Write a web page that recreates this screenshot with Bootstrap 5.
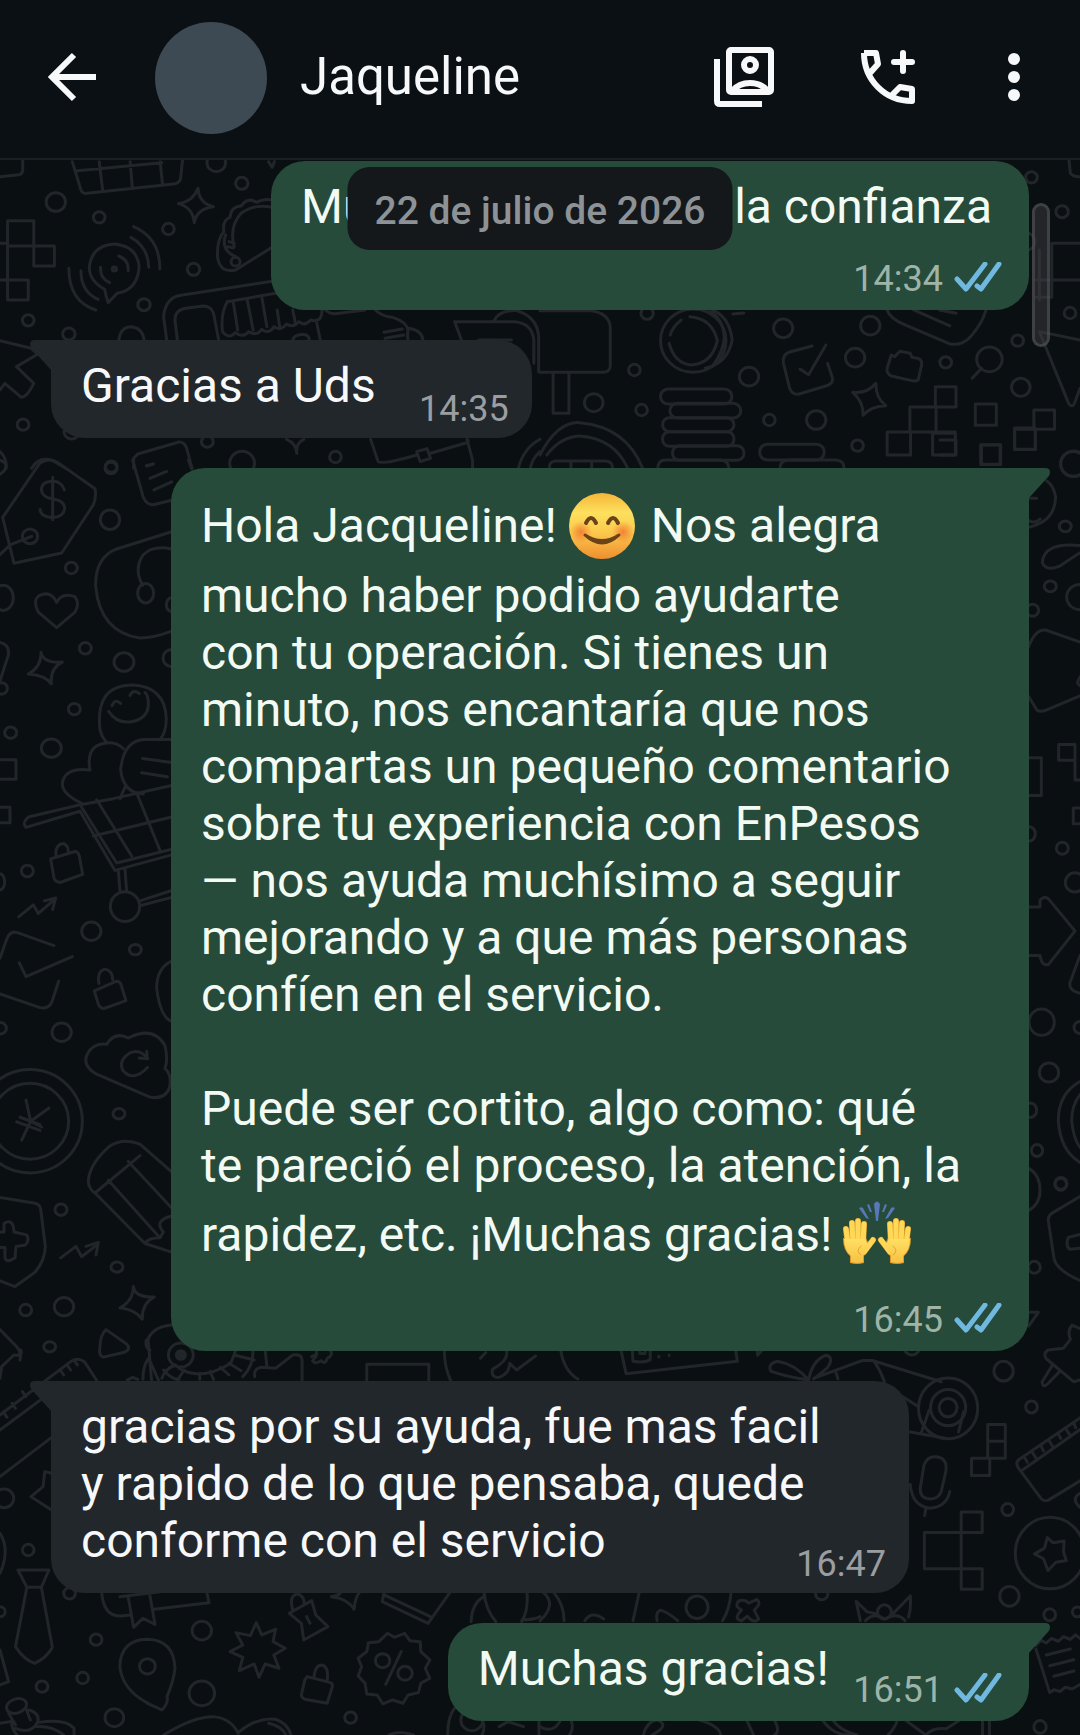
<!DOCTYPE html>
<html lang="es">
<head>
<meta charset="utf-8">
<meta name="viewport" content="width=device-width, initial-scale=1">
<title>Jaqueline</title>
<link href="https://cdn.jsdelivr.net/npm/bootstrap@5.3.0/dist/css/bootstrap.min.css" rel="stylesheet">
<style>
:root{--ground:#0a0f12;--sent:#264b3a;--got:#22272b}
body{background:var(--ground);font-family:Roboto,"Noto Sans",sans-serif;color:#f7f8fa}
.chat-head{height:160px;padding:0 60px 4px 48px;background:#0b1014;border-bottom:2px solid #1b1f22}
.icon-btn{padding:0;border:0;background:none;color:#f7f8fa;line-height:0}
.avatar{width:112px;height:112px;background:#3d4953;margin:2px 0 0 59px}
.contact{font-size:51px;line-height:60px;font-weight:400;margin-left:33px}
.head-tools{gap:87px}
.doodle{top:0;left:0;width:1080px;height:1575px;fill:none;stroke:#22262a;stroke-width:3;stroke-linecap:round;stroke-linejoin:round}
.doodle *{vector-effect:non-scaling-stroke}
.thread{gap:30px;padding:1px 51px 15px}
.bubble{max-width:calc(100% - 120px);border-radius:34px;display:grid}
.bubble-text{font-size:48px;line-height:57px;padding:17px 37px 23px 30px}
.sent{background:var(--sent);color:#f3faf3}
.got{background:var(--got)}
.sent.tailed{border-top-right-radius:0}
.got.tailed{border-top-left-radius:0}
.stamp{font-size:36px;line-height:42px;gap:11px;justify-self:end}
.sent .stamp{color:#9fb4a8;padding:0 27px 10px 0}
.got .stamp{color:#9b9ea1;padding:0 23px 8px 0}
.overlap>.bubble-text,.overlap>.stamp{grid-area:1/1}
.overlap>.bubble-text{padding-bottom:24px}
.overlap>.stamp{align-self:end}
.got.overlap .room{padding-right:156px}
.sent.overlap .room{padding-right:200px}
.wide{width:100%}
.tail{width:22px;height:32px;top:0}
.sent .tail{left:100%;margin-left:-1px;fill:var(--sent)}
.got .tail{right:100%;margin-right:-1px;fill:var(--got)}
.emo{width:70px;height:82px;vertical-align:-25px;margin:0 2px 0 -2px}
.day{top:7px;left:50%;transform:translateX(-50%);background:#14181b;color:#8d9296;border-radius:22px;font-size:39px;line-height:47px;font-weight:500;padding:21px 27px 15px;white-space:nowrap}
.scroll-thumb{top:43px;right:30px;width:18px;height:144px;border-radius:9px;background:rgba(60,60,64,.5);border:3px solid rgba(90,92,95,.5)}
</style>
<script src="https://cdn.jsdelivr.net/npm/bootstrap@5.3.0/dist/js/bootstrap.bundle.min.js"></script>
</head>
<body>
<header class="chat-head d-flex align-items-center">
  <button class="icon-btn" type="button" aria-label="Volver"><svg width="48" height="50" viewBox="0 0 48 50" fill="none" stroke="currentColor" stroke-width="6"><path d="M48 25H5M26 3L4 25L26 47"/></svg></button>
  <div class="avatar rounded-circle"></div>
  <h1 class="contact mb-0">Jaqueline</h1>
  <div class="head-tools d-flex align-items-center ms-auto">
    <button class="icon-btn" type="button" aria-label="Contacto"><svg width="60" height="60" viewBox="0 0 60 60" fill="none" stroke="currentColor" stroke-width="6"><path d="M3 12V54Q3 57 6 57H48"/><rect x="15" y="3" width="42" height="42" rx="2"/><circle cx="36" cy="18" r="6"/><path d="M18 44Q25 36 36 36T54 44"/></svg></button>
    <button class="icon-btn" type="button" aria-label="Llamar"><svg width="54" height="54" viewBox="0 0 54 54" fill="none" stroke="currentColor" stroke-width="6" stroke-linejoin="round"><path d="M3 3C3 30 24 51 51 51V39L39 37L31 45M9 23L17 14L15 3H3"/><path stroke-linecap="round" d="M33 12H51M42 3V21"/></svg></button>
    <button class="icon-btn" type="button" aria-label="Más opciones"><svg class="d-block" width="18" height="50" viewBox="0 0 18 50" fill="currentColor"><circle cx="12" cy="7" r="6"/><circle cx="12" cy="25" r="6"/><circle cx="12" cy="43" r="6"/></svg></button>
  </div>
</header>

<main class="position-relative overflow-hidden">
  <svg class="doodle position-absolute" viewBox="0 160 1080 1575" aria-hidden="true">
    <g transform="translate(0 150) scale(.3444 .3333)">
      <path d="M0 80L55 74Q66 72 66 60V30M210 35L235 120Q240 132 252 130L505 102Q520 100 524 88L530 30M225 62L470 38M288 35L298 120M378 35L384 112M465 35L472 104M780 35L790 52L797 35"/>
      <path d="M575 115Q578 160 620 170Q572 175 564 218Q560 172 518 161Q560 155 575 115Z"/>
      <circle cx="162" cy="156" r="28"/><circle cx="628" cy="38" r="27"/><circle cx="288" cy="202" r="17"/><circle cx="702" cy="100" r="18"/><circle cx="489" cy="237" r="17"/><circle cx="562" cy="358" r="18"/><circle cx="418" cy="464" r="18"/><circle cx="82" cy="511" r="17"/><circle cx="200" cy="552" r="18"/><circle cx="67" cy="824" r="17"/><circle cx="602" cy="875" r="17"/><circle cx="703" cy="940" r="36"/><circle cx="974" cy="921" r="17"/><circle cx="323" cy="950" r="17"/><circle cx="208" cy="845" r="22"/>
      <path d="M22 212H98V288H22ZM98 288H158V348H98ZM22 290V450H82V390H0M0 280H22"/>
      <path d="M304 418Q255 390 260 345Q270 285 332 282Q398 288 404 350Q400 420 340 430L314 458Q308 440 304 418ZM292 352Q290 385 318 398M345 318Q375 330 372 362M380 262Q430 290 432 352M388 230Q465 265 464 357M235 362Q235 425 285 448M200 355Q200 455 278 480"/><circle cx="332" cy="357" r="6"/>
      <path d="M684 360Q640 370 632 325Q628 270 650 245Q645 210 668 202Q670 170 700 168Q720 140 745 157Q765 145 790 150M684 360L790 292M680 290Q665 230 700 190Q740 160 790 172M655 255Q640 300 684 320M665 275L680 280M662 290L678 294"/><circle cx="684" cy="335" r="13"/>
      <path d="M484 570L475 500Q480 440 530 435L800 392M515 570L508 510Q508 480 540 475L590 468Q612 468 620 490L635 570M660 455L800 430M660 455Q640 490 646 545Q665 570 683 548Q705 565 722 545Q745 560 760 538Q780 555 796 530Q815 545 832 522Q850 535 868 515Q885 530 902 510Q935 520 935 480M678 460L690 540M718 450L735 540M760 440L775 530M805 480L812 530M850 480L858 520M920 520L930 570M850 570Q852 555 880 553Q898 555 898 570M345 570Q350 530 382 530Q415 535 418 570"/>
      <path d="M945 480Q960 495 985 490L1060 480M1090 480Q1110 500 1140 502Q1180 515 1185 540Q1180 570 1190 580M1185 535Q1225 540 1228 570M1115 547L1168 537M1118 565L1172 555M1320 515H1495Q1545 520 1550 570V640M1320 515L1340 570M1435 512Q1450 480 1500 482Q1560 500 1564 560V665M1390 570H1485"/>
      <path d="M0 572L90 595L110 612L48 650L98 700Q80 740 62 742L14 700L0 720M832 868Q860 880 862 910Q858 880 882 868M388 955L388 925L400 912L520 876Q535 875 542 895L558 955M425 948L445 942M92 955Q110 920 150 930L190 955M0 905Q20 925 18 955M1076 868L1098 935Q1110 945 1210 915M1250 910L1350 880Q1365 875 1356 868L1372 930V955M1210 905L1240 896L1250 925L1220 935ZM1505 955Q1520 895 1568 868M1540 955Q1545 925 1568 905"/>
    </g>
    <g transform="translate(540 150) scale(.3444 .3333)">
      <path d="M1536 30L1540 70Q1550 82 1568 80M0 482H150Q200 490 204 530V650Q202 665 185 667H0M38 670V790H84V670M0 915Q50 815 115 818Q250 830 298 955M20 915Q60 860 115 858Q215 865 255 955M28 955Q25 935 45 933H190Q212 935 210 955M90 935V955M150 935V955"/>
      <circle cx="445" cy="572" r="95"/><path d="M375 580Q390 640 440 645Q500 640 515 572Q500 505 435 500M378 555Q385 530 410 510M480 655Q545 640 558 570Q550 500 500 480M500 650Q535 600 535 560Q530 500 490 485M560 492L592 489"/>
      <rect x="350" y="717" width="207" height="45" rx="22"/><rect x="377" y="760" width="206" height="44" rx="22"/><rect x="356" y="803" width="207" height="42" rx="20"/><rect x="356" y="845" width="207" height="44" rx="20"/><rect x="385" y="887" width="207" height="44" rx="20"/><path d="M342 955Q342 930 365 930H525Q548 932 548 955M697 955Q697 932 720 930H860Q884 932 882 955"/><rect x="638" y="883" width="187" height="47" rx="22"/>
      <path d="M790 588L725 606Q702 615 707 640L725 715Q732 735 750 733L830 708Q855 700 848 680L835 640M755 657L780 674L830 585M1020 615L1030 620L1045 604L1075 610L1080 622L1100 626Q1110 632 1108 645L1098 690Q1090 695 1080 692L1020 678Q1005 670 1008 655ZM1255 685L1282 655M975 700Q975 745 1004 767Q960 768 938 796Q940 755 908 727Q950 732 975 700Z"/>
      <circle cx="1305" cy="628" r="37"/><circle cx="311" cy="490" r="18"/><circle cx="274" cy="660" r="17"/><circle cx="295" cy="780" r="17"/><circle cx="156" cy="758" r="27"/><circle cx="607" cy="680" r="28"/><circle cx="706" cy="535" r="28"/><circle cx="959" cy="527" r="28"/><circle cx="915" cy="623" r="28"/><circle cx="802" cy="810" r="28"/><circle cx="666" cy="810" r="17"/><circle cx="922" cy="887" r="17"/><circle cx="1178" cy="637" r="17"/><circle cx="1387" cy="572" r="17"/><circle cx="1396" cy="712" r="27"/><circle cx="1427" cy="82" r="17"/><circle cx="1516" cy="185" r="18"/><circle cx="1539" cy="489" r="17"/><circle cx="1410" cy="275" r="27"/><circle cx="1550" cy="941" r="38"/>
      <path d="M1008 480Q1015 505 1060 525L1190 582Q1225 588 1250 560Q1285 520 1295 480M1085 480L1190 528M1160 480L1208 490M1148 710H1208V771H1148ZM1074 771H1150V846H1074ZM1008 846H1076V915H1008ZM1140 850H1206V915H1140ZM1150 771V846H1206M1264 762H1325V826H1264ZM1434 780H1494V838H1434ZM1378 838H1438V898H1378ZM1282 885H1336V943H1282ZM1568 280H1486V390H1568M1440 390H1486M1440 442H1486V390M1568 570L1450 545L1535 760Q1545 775 1552 760L1568 715M1450 300V450"/>
    </g>
    <g transform="translate(0 460) scale(.3333 .574)">
      <path d="M8 100L120 5Q150-5 175 5L285 50Q290 65 280 78L185 162L42 180ZM0 165L30 148L95 133M193 52Q185 37 158 37Q125 37 124 52Q127 65 158 68Q193 70 194 85Q190 100 158 100Q123 100 120 86M158 30V104M398 0L430 65Q440 78 460 78L515 70M440 10L460 7M450 32L500 20M462 52L515 38M565 0L575 15M0 0L15 5Q25 15 0 25"/>
      <ellipse cx="90" cy="133" rx="23" ry="13"/><ellipse cx="333" cy="14" rx="18" ry="10"/><ellipse cx="330" cy="104" rx="29" ry="17"/><ellipse cx="214" cy="188" rx="18" ry="10"/><ellipse cx="10" cy="240" rx="30" ry="22"/><ellipse cx="256" cy="328" rx="18" ry="10"/><ellipse cx="372" cy="352" rx="30" ry="16"/><ellipse cx="223" cy="434" rx="18" ry="10"/><ellipse cx="32" cy="475" rx="18" ry="10"/><ellipse cx="154" cy="502" rx="30" ry="16"/><ellipse cx="82" cy="716" rx="18" ry="10"/><ellipse cx="274" cy="821" rx="29" ry="16"/><ellipse cx="406" cy="853" rx="18" ry="9"/><ellipse cx="185" cy="997" rx="29" ry="16"/><ellipse cx="357" cy="1139" rx="18" ry="9"/><ellipse cx="183" cy="1306" rx="18" ry="10"/><ellipse cx="351" cy="1406" rx="18" ry="9"/><ellipse cx="192" cy="1475" rx="29" ry="16"/><ellipse cx="77" cy="1481" rx="18" ry="10"/><ellipse cx="149" cy="1545" rx="18" ry="9"/><ellipse cx="0" cy="735" rx="14" ry="14"/><ellipse cx="2" cy="990" rx="17" ry="10"/><ellipse cx="5" cy="398" rx="17" ry="10"/><ellipse cx="515" cy="252" rx="16" ry="12"/><ellipse cx="515" cy="345" rx="26" ry="15"/>
      <path d="M515 125L350 155Q285 170 287 220Q300 300 420 310Q460 310 515 298M428 218Q400 190 430 165Q460 148 515 155M170 292L115 265Q90 235 140 233Q160 235 170 248Q185 230 225 238Q240 250 225 265ZM123 335Q130 355 187 352Q150 362 154 390Q135 375 85 373Q125 360 123 335ZM0 318Q30 322 25 340L0 385"/><ellipse cx="437" cy="232" rx="24" ry="17"/>
      <path d="M300 470Q285 392 398 392Q495 395 499 450Q499 475 480 487M326 438Q350 460 395 456Q445 450 445 425Q445 410 435 405M336 428Q345 415 362 424M390 410Q400 398 418 407M245 598Q180 580 188 560Q200 535 270 540Q260 510 290 498Q340 485 370 503M300 470Q305 482 318 491M515 487H430Q370 490 362 540Q370 580 430 582M428 520L515 527M425 545L502 552M375 570L360 590"/>
      <path d="M0 522H48V556H0M0 605H30V632H0M515 567L340 590L245 600L85 622Q65 632 78 640L240 612L345 715L515 688M245 605L350 702L515 678M290 592L395 690M410 580L480 680M280 655L515 622M355 715L360 752M375 712L380 752"/><ellipse cx="375" cy="778" rx="44" ry="26"/><path d="M420 768L515 750M422 776L515 762M152 695L225 682Q235 682 238 690L248 722L180 736Q165 735 162 728ZM168 688Q165 670 190 668Q205 672 205 682M56 796L100 775L115 790L165 765M133 768L167 763L158 783M162 846L50 823Q30 820 20 835L0 868M0 930L120 954Q145 957 155 945L176 908M58 876L78 900L217 865M283 925L350 908Q360 908 363 914L378 942L310 956Q298 953 295 948ZM297 912Q290 890 315 887Q338 890 338 905M515 873Q470 885 470 920Q480 970 515 978"/>
      <path d="M290 1070Q245 1055 262 1035Q280 1015 320 1018Q345 995 385 1007Q460 985 495 1020Q505 1045 495 1060Q515 1070 510 1090Q500 1115 450 1110ZM443 1043Q420 1025 390 1033Q355 1045 368 1063Q400 1085 443 1058M418 1042L442 1043L440 1030"/>
      <ellipse cx="90" cy="1152" rx="157" ry="90"/><ellipse cx="90" cy="1152" rx="116" ry="66"/><path d="M78 1115L92 1152L147 1129M92 1152L65 1185M92 1152L125 1162M50 1153L120 1168M60 1145L120 1158"/>
      <path d="M515 1240L420 1192Q370 1180 330 1195Q270 1225 265 1255Q265 1270 285 1277L435 1365L515 1380M285 1277L420 1212M325 1255L475 1352M385 1222L515 1303M435 1365Q445 1355 480 1355L490 1345Q460 1325 515 1317M0 1285L105 1295Q120 1297 122 1305L136 1370Q135 1395 105 1415L45 1440L0 1430M0 1345L12 1345L12 1330Q40 1320 42 1345L80 1350Q90 1360 75 1368L48 1370L45 1390Q20 1400 15 1390V1372L0 1372M182 1390L228 1370L245 1388L292 1367M258 1370L295 1363L288 1385M400 1440Q405 1460 463 1458Q425 1470 427 1497Q405 1480 360 1477Q400 1465 400 1440ZM318 1515L380 1540Q395 1550 370 1555L310 1563Q295 1560 300 1545Q300 1525 318 1515ZM0 1515L50 1545Q65 1555 60 1568M515 1507Q450 1510 440 1540"/>
    </g>
    <g transform="translate(940 440) scale(.3333 .5995)">
      <path d="M0 0H48V25H0M122 8H182V41H122ZM224-20H286V16H224ZM270 145Q345 135 347 95Q340 75 320 68M268 97L290 97M268 135Q285 140 300 132M420 176Q310 170 307 205Q320 220 360 210Q400 195 420 188M266 345Q285 315 318 317L420 337M266 428L290 450Q300 455 320 450L420 427M420 395L412 405L420 410M266 530H304V593H266M356 508H405V534H356ZM405 534V567H420M420 614H400V640H420M266 779H300V768Q310 760 325 765L405 819L325 875Q305 878 300 860H266M420 860L390 905Q385 918 420 923M420 1070Q355 1090 355 1135Q360 1185 420 1205M420 1092Q395 1110 395 1135Q400 1165 420 1180M266 1215Q300 1225 300 1252Q300 1275 266 1285M420 1262L335 1290Q323 1295 325 1303L342 1365Q350 1385 420 1402M420 1325L385 1330Q375 1345 390 1350L420 1348M270 1455L295 1455L266 1478"/>
      <ellipse cx="400" cy="40" rx="38" ry="21"/><ellipse cx="376" cy="144" rx="18" ry="9"/><ellipse cx="331" cy="244" rx="18" ry="9"/><ellipse cx="420" cy="262" rx="40" ry="21"/><ellipse cx="278" cy="284" rx="18" ry="10"/><ellipse cx="268" cy="657" rx="18" ry="12"/><ellipse cx="367" cy="681" rx="18" ry="10"/><ellipse cx="405" cy="738" rx="29" ry="16"/><ellipse cx="305" cy="971" rx="38" ry="22"/><ellipse cx="420" cy="980" rx="18" ry="10"/><ellipse cx="327" cy="1055" rx="29" ry="16"/><ellipse cx="272" cy="1118" rx="18" ry="12"/><ellipse cx="291" cy="1185" rx="17" ry="10"/><ellipse cx="363" cy="1240" rx="18" ry="10"/><ellipse cx="283" cy="1380" rx="18" ry="10"/>
    </g>
    <g transform="translate(540 1180) scale(.3444 .354)">
      <path d="M60 480Q70 540 110 562M235 480L250 547L573 512L568 480M268 480L270 512Q300 518 320 508V480M290 480V490L305 490V480M345 498V500M375 494V496M630 480L632 495L645 480M780 565Q740 520 690 512Q660 518 670 540Q710 555 780 565Q790 510 830 495Q855 500 835 530L795 562M795 560L935 510H965L1165 570M860 545L865 562M970 512Q990 540 1000 570M1050 610L1098 640M1075 712L1180 730M1130 650L1108 712M1230 655L1215 712"/>
      <circle cx="1185" cy="645" r="86"/><circle cx="1185" cy="643" r="51"/><circle cx="1185" cy="643" r="26"/><circle cx="1346" cy="540" r="28"/><circle cx="1427" cy="641" r="17"/><circle cx="1358" cy="931" r="17"/><circle cx="1481" cy="1054" r="101"/><circle cx="1363" cy="1176" r="28"/><circle cx="1480" cy="1228" r="17"/><circle cx="1560" cy="1220" r="14"/><circle cx="456" cy="1207" r="32"/><circle cx="818" cy="1168" r="18"/><circle cx="1452" cy="1545" r="18"/><circle cx="1000" cy="1220" r="20"/><circle cx="1080" cy="470" r="24"/><circle cx="1512" cy="12" r="17"/>
      <path d="M1300 691H1351V786H1300ZM1300 738H1351M1253 786H1306V835H1253ZM1223 938H1284V996H1223ZM1116 996H1223V1098H1116ZM1223 1098H1284V1156H1223ZM1150 782Q1185 785 1178 825L1165 880Q1155 905 1125 900Q1100 895 1105 865L1115 805Q1125 780 1150 782ZM1075 860Q1080 920 1130 927Q1180 925 1190 880M1120 930L1117 948M1568 672L1390 790Q1380 800 1388 812L1455 900Q1462 908 1475 905L1568 850M1400 820L1568 705M1408 785L1415 797M1430 770L1440 785M1455 752L1462 765M1478 735L1488 752M1505 718L1512 730M1525 700L1537 718M1550 685L1555 700M1568 885Q1540 900 1568 925M1473 1010L1490 1025L1522 1020L1520 1050L1528 1075L1498 1080L1475 1103L1462 1070L1436 1056L1465 1040ZM1568 420L1545 410Q1530 425 1540 450L1520 475L1475 480Q1460 490 1470 505L1550 570L1568 565M1490 520L1458 570Q1460 590 1475 575L1510 540M1440 1315L1455 1300L1470 1308L1485 1295L1505 1303L1520 1290L1540 1298L1555 1285L1568 1295M1440 1325L1480 1448L1492 1440L1510 1445L1525 1433L1545 1438L1568 1425M1470 1342L1540 1325M1480 1372L1550 1355M1492 1402L1550 1387"/>
      <path d="M10 1165Q50 1200 0 1245M40 1165Q70 1200 70 1245M288 1165L270 1245M340 1245Q335 1220 350 1215Q370 1220 400 1245M555 1165Q550 1215 530 1245M130 1245Q150 1215 185 1240M600 1190Q570 1180 572 1205L585 1215Q560 1240 585 1245L602 1232Q620 1255 635 1240L622 1215Q645 1195 630 1185L605 1195ZM930 1245L918 1190L950 1220L975 1225M1025 1225L1075 1175Q1078 1210 1070 1235M945 1245Q970 1220 1000 1240Q1040 1220 1060 1245M820 1525Q850 1568 900 1568M1038 1525Q1030 1550 1010 1568M300 1568Q310 1530 340 1525Q380 1540 325 1568M460 1525Q520 1540 525 1568M600 1525L620 1568M680 1525Q700 1560 680 1568M850 1525Q870 1555 920 1568M1060 1525L1120 1568Q1140 1545 1180 1550L1220 1525M1285 1525V1568M1305 1525V1568M90 1525Q100 1550 85 1568M0 1545Q40 1565 60 1525"/>
    </g>
    <g transform="translate(0 1340) scale(.3444 .3333)">
      <path d="M430 0L440 120M425 0Q420 20 435 30M415 118Q415 75 432 55L460 120M470 115Q480 85 510 75M520 85Q585 125 670 70L685 30M475 90Q500 120 520 118M535 90L515 120M580 100V118M610 95L620 118M640 82L665 105M665 70L700 92M680 45L738 60M735 30Q735 80 705 110M770 30L775 80M740 110Q735 85 760 82L800 85L850 45Q875 40 877 60V120M370 120L385 112L400 118M905 50L920 42L918 30M958 30Q970 45 950 55Q945 75 932 62Q915 75 908 62L918 48M1065 120V73H1245V120M1290 30Q1290 80 1308 120M1395 55L1410 38M1470 30Q1480 60 1430 88Q1425 115 1450 112Q1480 100 1480 70L1500 90L1555 48"/>
      <circle cx="525" cy="45" r="36"/><circle cx="525" cy="45" r="13" fill="#22262a"/><circle cx="12" cy="475" r="28"/><circle cx="82" cy="630" r="17"/><circle cx="202" cy="760" r="17"/><circle cx="0" cy="815" r="15"/><circle cx="279" cy="899" r="17"/><circle cx="240" cy="1014" r="17"/><circle cx="122" cy="1040" r="17"/><circle cx="586" cy="872" r="28"/><circle cx="586" cy="1060" r="37"/><circle cx="332" cy="1133" r="27"/><circle cx="1018" cy="1133" r="17"/><circle cx="428" cy="979" r="23"/><circle cx="1111" cy="962" r="21"/><circle cx="1176" cy="1000" r="21"/><circle cx="1370" cy="1140" r="32"/>
      <path d="M60 30Q68 50 40 45L5 80L0 115M0 225L205 65Q225 50 245 65L280 120M0 270L150 155M0 410L150 292M75 170L65 155M105 155L95 140M45 205L35 190M20 232L10 215M185 105L175 90M205 90L195 75M225 75L218 65M150 400L130 395L125 440L90 470L150 510M0 580Q30 630 0 700M52 690H142L120 742H78ZM78 742L45 920Q70 960 100 970Q135 955 152 922L120 742M0 930L25 1025L0 1035M295 755Q300 830 350 828L380 825M448 808L607 788L600 755M348 770L465 755M372 770L388 862L415 835L450 853L435 765M428 1090L470 1110Q490 1090 485 1070Q505 1020 508 985Q505 900 428 898Q350 900 348 980Q355 1050 430 1090"/>
      <path d="M744 848L760 885L800 868L793 905L828 925L795 945L810 985L770 972L752 1012L738 972L695 992L705 952L668 935L705 915L685 878L727 887ZM850 810Q838 765 865 762Q885 770 883 795M840 820L905 782L917 825L952 860L882 900L875 850ZM890 830L900 850M962 770Q985 768 990 755M962 770Q1010 775 1028 808Q1030 775 1045 755M1115 758L1110 785L1243 850L1308 755M1115 765L1250 830M892 1010L960 1028Q967 1032 965 1040L950 1090L885 1078Q872 1070 876 1060L885 1020ZM912 1010Q915 975 935 975Q955 980 950 1020M1165 935L1120 1033M1125 880L1145 892L1175 880L1190 902L1220 905L1222 935L1248 960L1235 985L1248 1015L1222 1030L1215 1058L1185 1065L1170 1090L1140 1080L1112 1092L1095 1065L1065 1062L1060 1030L1040 1008L1050 980L1040 955L1065 935L1070 908L1100 905ZM1405 755Q1410 810 1440 845M1530 755Q1535 810 1515 845M1368 845Q1370 790 1405 770M1515 840Q1550 840 1568 830M475 1185Q560 1130 620 1130Q670 1135 692 1180M695 1175Q750 1130 800 1138Q835 1150 845 1185M780 1150Q820 1160 830 1185M1300 1185Q1300 1130 1320 1105M1400 1140Q1410 1160 1400 1185M1450 1160L1475 1145L1520 1160M1565 1140V1185M1130 1185Q1160 1170 1200 1185"/>
      <ellipse cx="48" cy="1098" rx="30" ry="21" transform="rotate(-20 48 1098)"/><path d="M25 1120L45 1155M75 1105L88 1140M35 1140Q30 1165 50 1185M85 1110Q115 1120 110 1145Q90 1185 45 1165M110 1148Q190 1135 215 1165V1185M100 1160Q150 1155 185 1185M0 1150L30 1145"/>
    </g>
  </svg>

  <div class="thread position-relative d-flex flex-column">
    <article class="bubble sent align-self-end">
      <div class="bubble-text">Muchas gracias por la confianza</div>
      <div class="stamp d-flex align-items-center"><time>14:34</time><svg width="48" height="34" viewBox="0 0 48 34" fill="none" stroke="#70b8e0" stroke-width="5" stroke-linecap="round" stroke-linejoin="round"><path d="M3 17L12 27L31 2"/><path d="M23 24L27 27L45 2"/></svg></div>
    </article>

    <article class="bubble got tailed overlap position-relative align-self-start">
      <svg class="tail position-absolute" viewBox="0 0 22 32"><path d="M22 0H5Q0 0 0 4Q0 7 2 9L22 31Z"/></svg>
      <div class="bubble-text room">Gracias a Uds</div>
      <div class="stamp"><time>14:35</time></div>
    </article>

    <article class="bubble sent tailed wide position-relative align-self-end">
      <svg class="tail position-absolute" viewBox="0 0 22 32"><path d="M0 0H17Q22 0 22 4Q22 7 20 9L0 31Z"/></svg>
      <div class="bubble-text">Hola Jacqueline! <svg class="emo" viewBox="0 0 70 82" role="img" aria-label="Cara sonriente"><defs><linearGradient id="skin" x2="0" y2="1"><stop stop-color="#f5b638"/><stop offset=".3" stop-color="#fde05e"/><stop offset=".6" stop-color="#fbc94c"/><stop offset="1" stop-color="#ee8e30"/></linearGradient><radialGradient id="blush"><stop stop-color="#ef6a2c" stop-opacity=".75"/><stop offset="1" stop-color="#ef6a2c" stop-opacity="0"/></radialGradient></defs><circle cx="35" cy="41" r="33" fill="url(#skin)"/><circle cx="14" cy="47" r="11" fill="url(#blush)"/><circle cx="56" cy="47" r="11" fill="url(#blush)"/><g fill="none" stroke="#6a4418" stroke-linecap="round"><path stroke-width="4" d="M19 38Q24 28 29 38M41 38Q46 28 51 38"/><path stroke-width="3" d="M18 50Q35 66 52 50Q35 61 18 50Z" fill="#6a4418" stroke-linejoin="round"/></g></svg> Nos alegra<br>mucho haber podido ayudarte<br>con tu operación. Si tienes un<br>minuto, nos encantaría que nos<br>compartas un pequeño comentario<br>sobre tu experiencia con EnPesos<br>— nos ayuda muchísimo a seguir<br>mejorando y a que más personas<br>confíen en el servicio.<br><br>Puede ser cortito, algo como: qué<br>te pareció el proceso, la atención, la<br>rapidez, etc. ¡Muchas gracias! <svg class="emo" viewBox="0 0 70 82" role="img" aria-label="Manos levantadas"><defs><linearGradient id="palm" x2="0" y2="1"><stop stop-color="#ffdf63"/><stop offset="1" stop-color="#f8c043"/></linearGradient></defs><path fill="#5878b8" d="M32 10Q35 5 38 10L36 27H34ZM17 14Q21 12 22 16L27 25L24 24ZM53 14Q49 12 48 16L43 25L46 24ZM25 11L27 10L30 18H28ZM45 11L43 10L40 18H42Z"/><g id="hand" stroke-linecap="round" fill="none"><path stroke="#dc9a2c" stroke-width="6" d="M4 35L6 50M10 29L11 50M16 27L16 50M22 30L21 50M31 46L22 58"/><path fill="#dc9a2c" d="M1 44H24L28 52L22 62V69Q15 71 8 69V62Q1 56 1 44Z"/><path stroke="#ffd857" stroke-width="5" d="M4 35L6 50M10 29L11 50M16 27L16 50M22 30L21 50M31 46L22 58"/><path fill="url(#palm)" d="M2 45H23L27 52L21 62V68Q15 70 9 68V62Q2 56 2 45Z"/><path stroke="#e3a636" stroke-width="1" d="M19 61Q13 57 19 52"/></g><use href="#hand" transform="translate(70 0) scale(-1 1)"/></svg></div>
      <div class="stamp d-flex align-items-center"><time>16:45</time><svg width="48" height="34" viewBox="0 0 48 34" fill="none" stroke="#70b8e0" stroke-width="5" stroke-linecap="round" stroke-linejoin="round"><path d="M3 17L12 27L31 2"/><path d="M23 24L27 27L45 2"/></svg></div>
    </article>

    <article class="bubble got tailed overlap wide position-relative align-self-start">
      <svg class="tail position-absolute" viewBox="0 0 22 32"><path d="M22 0H5Q0 0 0 4Q0 7 2 9L22 31Z"/></svg>
      <div class="bubble-text">gracias por su ayuda, fue mas facil<br>y rapido de lo que pensaba, quede<br>conforme con el servicio</div>
      <div class="stamp"><time>16:47</time></div>
    </article>

    <article class="bubble sent tailed overlap position-relative align-self-end">
      <svg class="tail position-absolute" viewBox="0 0 22 32"><path d="M0 0H17Q22 0 22 4Q22 7 20 9L0 31Z"/></svg>
      <div class="bubble-text room">Muchas gracias!</div>
      <div class="stamp d-flex align-items-center"><time>16:51</time><svg width="48" height="34" viewBox="0 0 48 34" fill="none" stroke="#70b8e0" stroke-width="5" stroke-linecap="round" stroke-linejoin="round"><path d="M3 17L12 27L31 2"/><path d="M23 24L27 27L45 2"/></svg></div>
    </article>
  </div>

  <div class="day position-absolute">22 de julio de 2026</div>
  <div class="scroll-thumb position-absolute"></div>
</main>
</body>
</html>
